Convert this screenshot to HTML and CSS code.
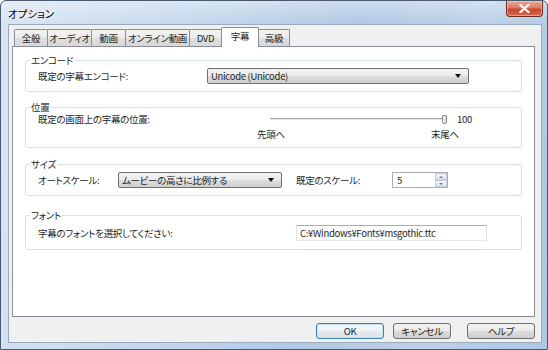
FILE: index.html
```html
<!DOCTYPE html>
<html lang="ja">
<head>
<meta charset="utf-8">
<title>オプション</title>
<link rel="stylesheet" href="styles.css">
</head>
<body>
<div class="window">
  <div class="titlebar">
    <span class="title">オプション</span>
    <div class="close">
      <svg width="11" height="9" viewBox="0 0 11 9"><path d="M1.5 1 L9.5 8 M9.5 1 L1.5 8" stroke="#ffffff" stroke-width="2.2" stroke-linecap="square"/></svg>
    </div>
  </div>
  <div class="client">
    <div class="tabs">
      <div class="tab w-t1">全般</div>
      <div class="tab w-t2">オーディオ</div>
      <div class="tab w-t3">動画</div>
      <div class="tab w-t4">オンライン動画</div>
      <div class="tab w-t5">DVD</div>
      <div class="tab tab-active w-t6">字幕</div>
      <div class="tab w-t7">高級</div>
    </div>
    <div class="panel">
      <fieldset class="group g1">
        <legend>エンコード</legend>
        <div class="row">
          <span class="label w-enc">既定の字幕エンコード:</span>
          <div class="combo combo-enc"><span>Unicode (Unicode)</span><i class="arrow"></i></div>
        </div>
      </fieldset>
      <fieldset class="group g2">
        <legend>位置</legend>
        <div class="row">
          <span class="label w-pos">既定の画面上の字幕の位置:</span>
          <div class="slider"><div class="track"></div><div class="thumb"></div></div>
          <span class="value">100</span>
        </div>
        <div class="row row-ticks">
          <span class="tick-start">先頭へ</span>
          <span>末尾へ</span>
        </div>
      </fieldset>
      <fieldset class="group g3">
        <legend>サイズ</legend>
        <div class="row">
          <span class="label w-auto">オートスケール:</span>
          <div class="combo combo-scale"><span>ムービーの高さに比例する</span><i class="arrow"></i></div>
          <span class="label w-defscale">既定のスケール:</span>
          <div class="spin"><span class="spin-val">5</span><div class="spin-btns"><div class="spin-up"><i></i></div><div class="spin-down"><i></i></div></div></div>
        </div>
      </fieldset>
      <fieldset class="group g4">
        <legend>フォント</legend>
        <div class="row">
          <span class="label w-font">字幕のフォントを選択してください:</span>
          <div class="textbox">C:¥Windows¥Fonts¥msgothic.ttc</div>
        </div>
      </fieldset>
    </div>
    <div class="buttons">
      <div class="btn btn-default w-ok">OK</div>
      <div class="btn w-cancel">キャンセル</div>
      <div class="btn w-help">ヘルプ</div>
    </div>
  </div>
</div>
</body>
</html>
```
FILE: styles.css
```css
* { box-sizing: border-box; }
html, body {
  margin: 0;
  padding: 0;
}
body {
  width: 548px;
  height: 350px;
  overflow: hidden;
  background: #ffffff;
  font-family: "Noto Sans CJK JP", "Noto Sans", sans-serif;
  font-size: 9.5px;
  line-height: 12px;
  letter-spacing: -0.3px;
  font-feature-settings: "palt";
  color: #1e1e1e;
}
.window {
  width: 548px;
  height: 350px;
  border: 1px solid #4a5a6e;
  border-radius: 6px 6px 0 0;
  background:
    linear-gradient(180deg, rgba(255,255,255,0.35) 0px, rgba(255,255,255,0) 22px),
    linear-gradient(100deg, #d9e6f4 0%, #c3d6ec 35%, #b2c9e3 60%, #bdd1e8 80%, #aec6e1 100%);
  display: flex;
  flex-direction: column;
}
.titlebar {
  height: 23px;
  display: flex;
  align-items: flex-start;
}
.title {
  margin-left: 7px;
  margin-top: 6px;
  font-size: 10.5px;
  line-height: 13px;
  letter-spacing: 0;
  color: #000000;
  text-shadow: 0 0 6px #ffffff, 0 0 3px #ffffff;
}
.close {
  margin-left: auto;
  margin-right: 4px;
  width: 37px;
  height: 16px;
  border: 1px solid #6a2d24;
  border-top: none;
  border-radius: 0 0 4px 4px;
  background: linear-gradient(180deg, #e9ab9d 0%, #dd7b66 45%, #c8462e 55%, #d2684f 100%);
  box-shadow: inset 0 0 0 1px rgba(255,220,210,0.5);
  display: flex;
  align-items: center;
  justify-content: center;
}
.client {
  margin-left: 7px;
  width: 534px;
  height: 319px;
  border: 1px solid #9aabbf;
  background: #f0f0f0;
  display: flex;
  flex-direction: column;
}
.tabs {
  display: flex;
  align-items: flex-end;
  height: 19px;
  margin-top: 2px;
  padding-left: 5px;
}
.tab {
  height: 17px;
  margin-left: -1px;
  border: 1px solid #898c95;
  border-bottom: none;
  border-radius: 2px 2px 0 0;
  background: linear-gradient(180deg, #f3f3f3 0%, #ebebeb 50%, #dedede 51%, #d9d9d9 100%);
  display: flex;
  align-items: center;
  justify-content: center;
  white-space: nowrap;
  color: #1e1e1e;
}
.tab:first-child { margin-left: 0; }
.tab-active {
  height: 20px;
  margin-bottom: -1px;
  background: #ffffff;
  position: relative;
  z-index: 2;
  padding-bottom: 3px;
}
.w-t1 { width: 34px; }
.w-t2 { width: 45px; }
.w-t3 { width: 35px; }
.w-t4 { width: 65px; }
.w-t5 { width: 33px; }
.w-t6 { width: 38px; }
.w-t7 { width: 32px; }
.panel {
  margin-left: 3px;
  width: 523px;
  height: 271px;
  border: 1px solid #898c95;
  background: #ffffff;
  padding: 0 12px;
  display: flex;
  flex-direction: column;
}
.group {
  margin: 0;
  padding: 0 4px;
  border: 1px solid #d5dfe5;
  border-radius: 3px;
  min-width: 0;
}
.group legend {
  padding: 0 1px;
  line-height: 12px;
  color: #1e1e1e;
}
.g1 { margin-top: 7px; padding-top: 2px; padding-bottom: 7px; }
.g2 { margin-top: 9px; padding-top: 0; padding-bottom: 7px; }
.g3 { margin-top: 10px; padding-top: 2px; padding-bottom: 7px; }
.g4 { margin-top: 13px; padding-top: 4px; padding-bottom: 8px; }
.row {
  display: flex;
  align-items: center;
  padding-left: 8px;
  min-height: 12px;
}
.label { flex: none; white-space: nowrap; }
.w-enc { width: 169px; }
.w-pos { width: 232px; }
.w-auto { width: 80px; }
.w-defscale { width: 96px; margin-left: 14px; }
.w-font { width: 258px; }
.combo {
  height: 16px;
  border: 1px solid #707070;
  border-radius: 2px;
  background: linear-gradient(180deg, #f2f2f2 0%, #ebebeb 50%, #dddddd 51%, #cfcfcf 100%);
  display: flex;
  align-items: center;
  padding-left: 3px;
  padding-right: 7px;
  white-space: nowrap;
}
.combo span { flex: 1; }
.combo-enc { width: 262px; }
.combo-scale { width: 164px; }
.arrow {
  width: 0;
  height: 0;
  border-left: 3px solid transparent;
  border-right: 3px solid transparent;
  border-top: 4px solid #111111;
}
.slider {
  width: 177px;
  height: 12px;
  display: flex;
  align-items: center;
}
.track {
  flex: 1;
  height: 2px;
  border-top: 1px solid #a8a8a8;
  border-bottom: 1px solid #e6e6e6;
}
.thumb {
  width: 5px;
  height: 9px;
  border: 1px solid #8b8b8b;
  border-radius: 1px 1px 2px 2px;
  background: linear-gradient(90deg, #f6f6f6, #dcdcdc);
}
.value { margin-left: 10px; }
.row-ticks { padding-left: 227px; margin-top: 3px; }
.tick-start { width: 174px; }
.spin {
  width: 56px;
  height: 16px;
  border: 1px solid #abadb3;
  background: #ffffff;
  display: flex;
}
.spin-val { flex: 1; padding-left: 4px; line-height: 14px; }
.spin-btns {
  width: 12px;
  display: flex;
  flex-direction: column;
}
.spin-up, .spin-down {
  flex: 1;
  border: 1px solid #c5cedb;
  background: linear-gradient(180deg, #f3f6fa, #dde5ef);
  display: flex;
  align-items: center;
  justify-content: center;
}
.spin-up i {
  width: 0; height: 0;
  border-left: 2px solid transparent;
  border-right: 2px solid transparent;
  border-bottom: 2px solid #6c7a8c;
}
.spin-down i {
  width: 0; height: 0;
  border-left: 2px solid transparent;
  border-right: 2px solid transparent;
  border-top: 2px solid #6c7a8c;
}
.textbox {
  width: 191px;
  height: 16px;
  border: 1px solid #abadb3;
  border-left-color: #e2e3ea;
  border-right-color: #dbdfe6;
  border-bottom-color: #e3e9ef;
  background: #ffffff;
  padding-left: 3px;
  line-height: 14px;
  white-space: nowrap;
}
.buttons {
  display: flex;
  justify-content: flex-end;
  margin-top: 6px;
  padding-right: 6px;
}
.btn {
  height: 16px;
  border: 1px solid #707070;
  border-radius: 3px;
  background: linear-gradient(180deg, #f2f2f2 0%, #ebebeb 50%, #dddddd 51%, #cfcfcf 100%);
  display: flex;
  align-items: center;
  justify-content: center;
}
.btn-default {
  border-color: #3c7fb1;
  box-shadow: inset 0 0 0 1px #c4e5f6;
  background: linear-gradient(180deg, #f5f8fa 0%, #eef2f5 50%, #e3e9ee 51%, #dbe2e8 100%);
}
.w-ok { width: 68px; }
.w-cancel { width: 58px; margin-left: 9px; }
.w-help { width: 68px; margin-left: 16px; }
```
